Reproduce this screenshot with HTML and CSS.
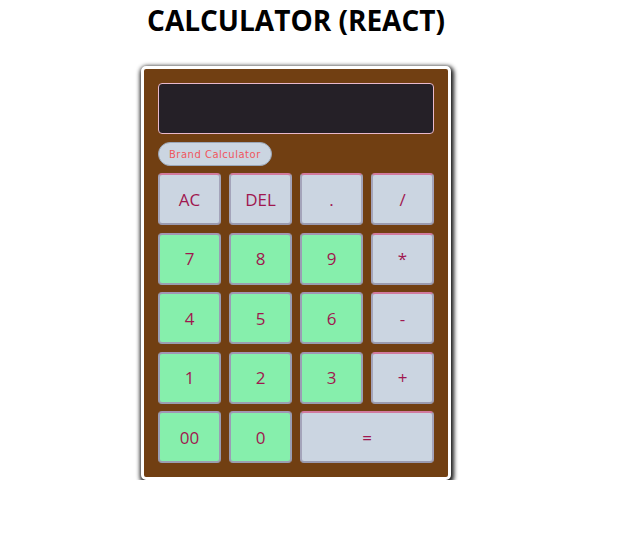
FILE: index.html
```html
<!DOCTYPE html>
<html>
<head>
<meta charset="utf-8">
<link rel="stylesheet" href="styles.css">
</head>
<body>
<div class="page">
  <h1 class="title">CALCULATOR (REACT)</h1>
  <div class="calc">
    <div class="display"></div>
    <button class="brand">Brand Calculator</button>
    <div class="keys">
      <button class="key op">AC</button>
      <button class="key op">DEL</button>
      <button class="key op">.</button>
      <button class="key op">/</button>
      <button class="key num">7</button>
      <button class="key num">8</button>
      <button class="key num">9</button>
      <button class="key op">*</button>
      <button class="key num">4</button>
      <button class="key num">5</button>
      <button class="key num">6</button>
      <button class="key op">-</button>
      <button class="key num">1</button>
      <button class="key num">2</button>
      <button class="key num">3</button>
      <button class="key op">+</button>
      <button class="key num">00</button>
      <button class="key num">0</button>
      <button class="key op wide">=</button>
    </div>
  </div>
</div>
</body>
</html>
```
FILE: styles.css
```css
* { box-sizing: border-box; }
body {
  margin: 0;
  background: #fff;
  font-family: "Open Sans", "Noto Sans", sans-serif;
}
.page {
  width: 592px;
  display: flex;
  flex-direction: column;
  align-items: center;
}
.title {
  margin: 2px 0 0;
  font-size: 28px;
  font-weight: 700;
  color: #000;
  line-height: 36px;
}
.calc {
  margin-top: 28px;
  width: 310px;
  background: #713f12;
  border: 3px solid #fff;
  border-radius: 5px;
  box-shadow: 1px 2px 4px 2px rgba(0,0,0,0.9);
  padding: 14px;
  display: flex;
  flex-direction: column;
  align-items: flex-start;
}
.display {
  width: 100%;
  height: 51px;
  background: #252027;
  border: 1px solid #e9b9cc;
  border-radius: 4px;
}
.brand {
  margin-top: 8px;
  height: 24px;
  padding: 0 10px;
  background: #cbd5e1;
  border: 1px solid #9aa6b8;
  border-radius: 12px;
  color: #f0565e;
  font-family: "DejaVu Sans", sans-serif;
  font-size: 10px;
  letter-spacing: 0.5px;
}
.keys {
  margin-top: 7px;
  width: 100%;
  display: grid;
  grid-template-columns: repeat(4, 1fr);
  grid-auto-rows: 52px;
  column-gap: 8px;
  row-gap: 7.5px;
}
.key {
  border: 2px solid;
  border-color: #d27a9e #a4a4ba #9a9aae #a4a4ba;
  border-radius: 4px;
  font-family: "Open Sans", "Noto Sans", sans-serif;
  font-size: 17px;
  font-weight: 500;
  color: #a0174f;
  padding: 0;
}
.num { background: #86efac; border-color: #a296b4 #9a9eb4 #9a9eb0 #9a9eb4; }
.op { background: #cbd5e1; }
.wide { grid-column: span 2; }
```
